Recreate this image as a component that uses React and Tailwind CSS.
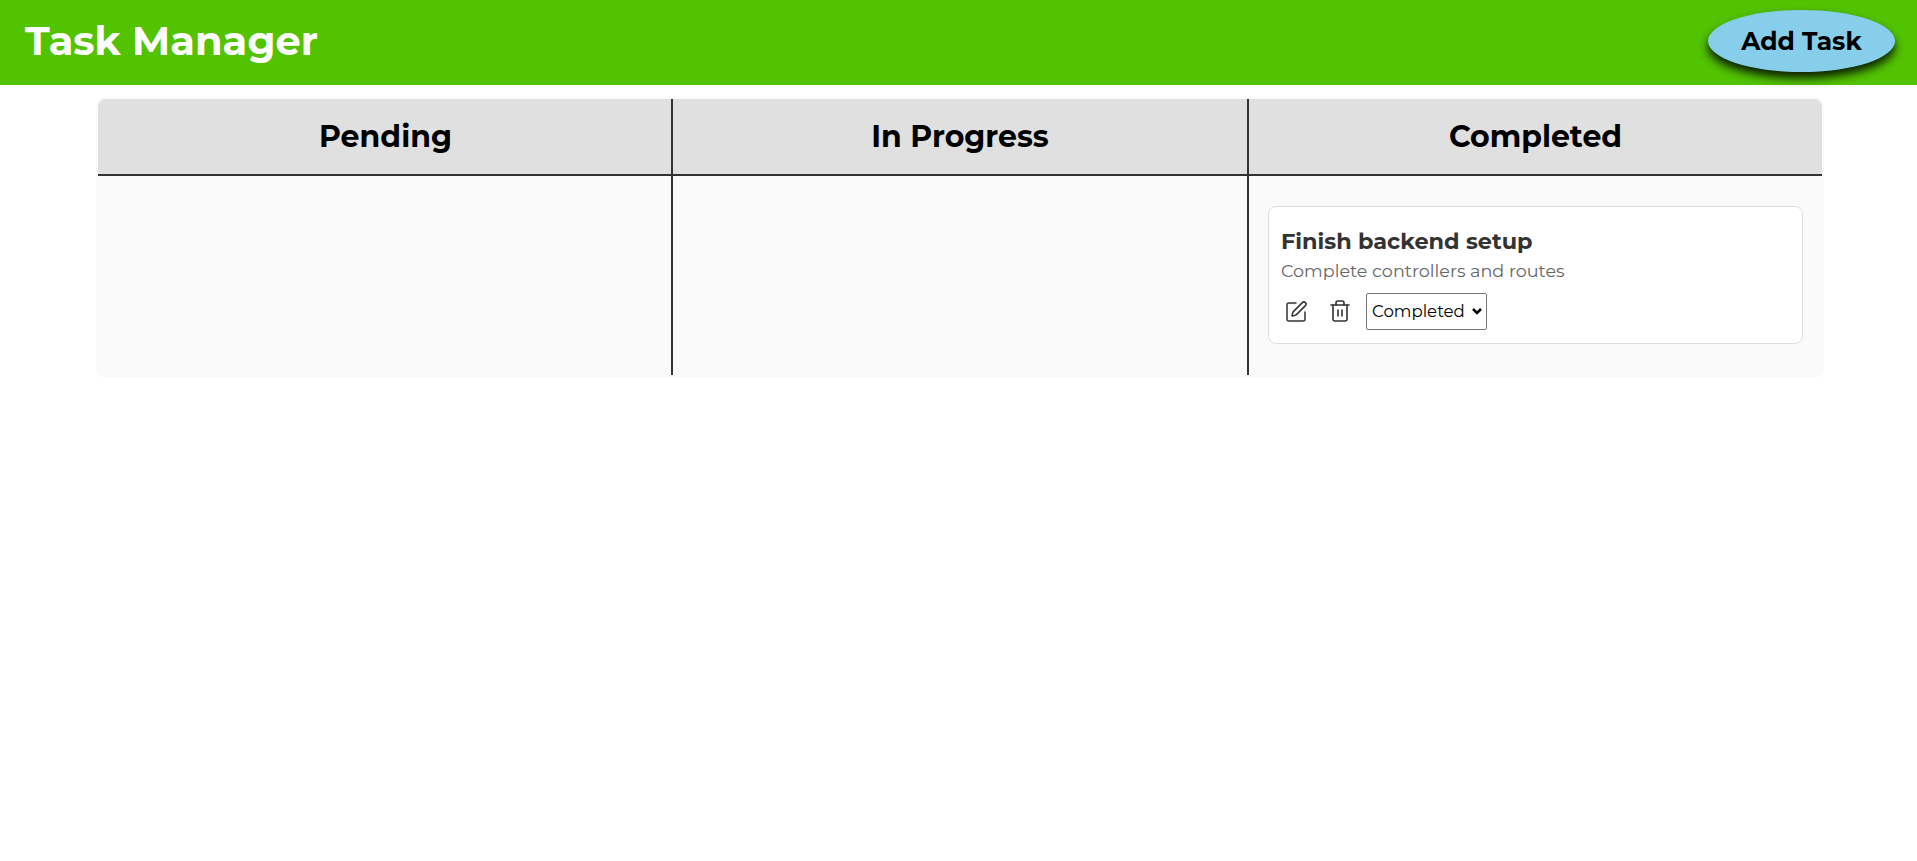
import React from "react";
import { SquarePen, Trash2 } from "lucide-react";

const columns = ["Pending", "In Progress", "Completed"];

const TaskCard = () => (
  <div className="bg-white border border-[#dddddd] rounded-lg h-[138px] px-[12px] pt-[19px]">
    <h3 className="text-[22.4px] leading-[30px] font-bold text-[#333333]">Finish backend setup</h3>
    <p className="text-[17.6px] leading-[24px] text-[#666666] mt-[3px]">Complete controllers and routes</p>
    <div className="flex items-center mt-[10px]">
      <button className="w-[30px] h-[32px] flex items-center justify-center text-[#333333]">
        <SquarePen size={24} strokeWidth={1.5} />
      </button>
      <button className="w-[30px] h-[32px] ml-[14px] pb-[2px] flex items-center justify-center text-[#333333]">
        <Trash2 size={24} strokeWidth={1.6} />
      </button>
      <div className="relative ml-[11px]">
        <select defaultValue="Completed" className="block w-[121px] h-[37px] pl-[5px] border border-[#767676] rounded-[2px] bg-white text-black text-[16.6px] appearance-none">
          <option>Pending</option>
          <option>In Progress</option>
          <option>Completed</option>
        </select>
        <svg className="absolute right-[5px] top-[15px] pointer-events-none" width="10" height="7" viewBox="0 0 10 7" fill="none">
          <path d="M1 1l4 4 4-4" stroke="#000000" strokeWidth="2.5" />
        </svg>
      </div>
    </div>
  </div>
);

export default function App() {
  return (
    <div className="min-h-[861px] bg-white font-['Montserrat','Inter','Liberation_Sans',sans-serif]">
      {/* Header */}
      <header className="h-[85px] bg-[#52c300] flex items-center justify-between pl-[25px] pr-[22px] pb-[3px]">
        <h1 className="text-[40px] font-bold text-white">Task Manager</h1>
        <button className="w-[187px] h-[62px] pt-[1px] rounded-[50%] bg-[#87ceeb] text-black text-[25px] font-bold shadow-[0_6px_10px_rgba(0,0,0,0.85)]">
          Add Task
        </button>
      </header>

      {/* Board */}
      <main className="ml-[96px] mr-[93px] mt-[12px] h-[280px] p-[2px] rounded-lg overflow-hidden bg-[#fafafa]">
        <div className="grid grid-cols-[575px_576px_1fr] h-full">
          {columns.map((name, i) => (
            <div key={name} className={`flex flex-col ${i < 2 ? "border-r-2 border-[#333333]" : ""}`}>
              <div className={`h-[77px] bg-[#e0e0e0] border-b-2 border-[#333333] flex items-center justify-center ${i === 0 ? "rounded-tl-lg pl-[2px]" : ""} ${i === 2 ? "rounded-tr-lg" : ""}`}>
                <h2 className="text-[30px] font-bold text-black">{name}</h2>
              </div>
              <div className="flex-1 px-[19px] pt-[30px]">
                {name === "Completed" && <TaskCard />}
              </div>
            </div>
          ))}
        </div>
      </main>
    </div>
  );
}
